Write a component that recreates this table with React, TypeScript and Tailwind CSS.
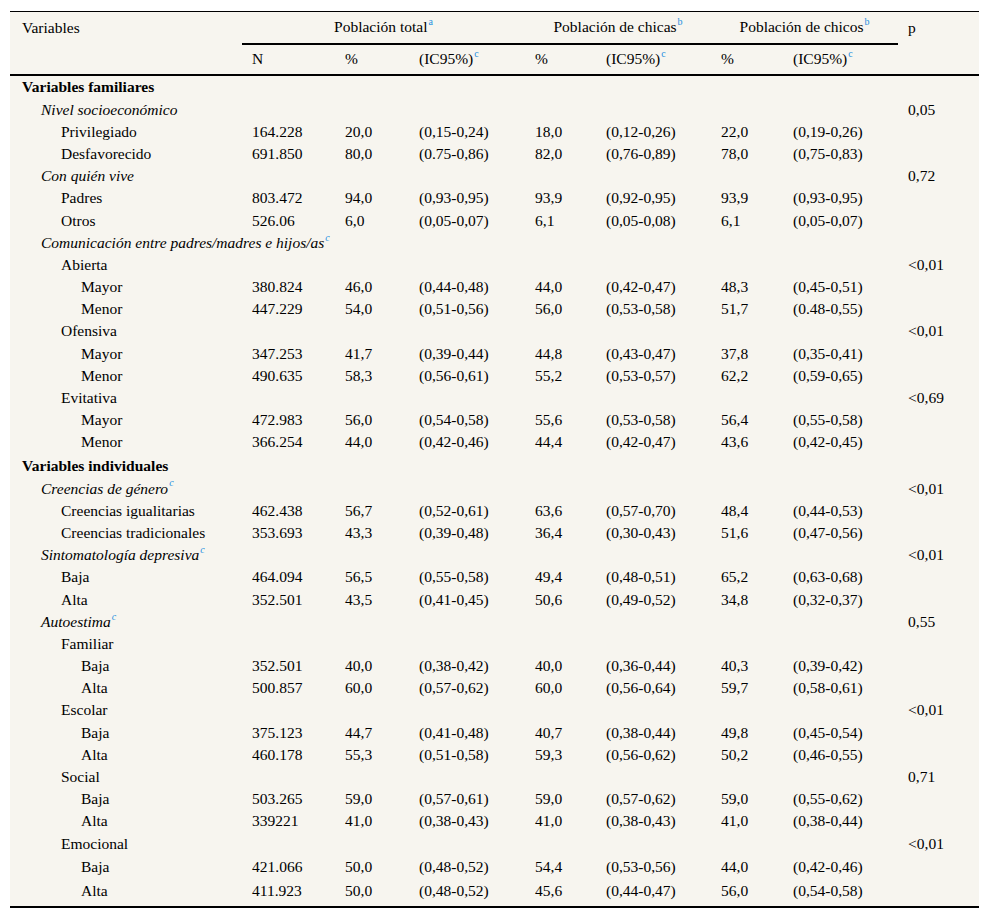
import React from "react";

type Row = {
  label: string;
  level: number;
  kind: "section" | "group" | "sub" | "data";
  sup?: string;
  vals?: string[];
  p?: string;
  h?: string;
};

const rows: Row[] = [
  { label: "Variables familiares", level: 0, kind: "section" },
  { label: "Nivel socioeconómico", level: 1, kind: "group", p: "0,05" },
  { label: "Privilegiado", level: 2, kind: "data", vals: ["164.228", "20,0", "(0,15-0,24)", "18,0", "(0,12-0,26)", "22,0", "(0,19-0,26)"] },
  { label: "Desfavorecido", level: 2, kind: "data", vals: ["691.850", "80,0", "(0.75-0,86)", "82,0", "(0,76-0,89)", "78,0", "(0,75-0,83)"] },
  { label: "Con quién vive", level: 1, kind: "group", p: "0,72" },
  { label: "Padres", level: 2, kind: "data", vals: ["803.472", "94,0", "(0,93-0,95)", "93,9", "(0,92-0,95)", "93,9", "(0,93-0,95)"] },
  { label: "Otros", level: 2, kind: "data", vals: ["526.06", "6,0", "(0,05-0,07)", "6,1", "(0,05-0,08)", "6,1", "(0,05-0,07)"] },
  { label: "Comunicación entre padres/madres e hijos/as", level: 1, kind: "group", sup: "c" },
  { label: "Abierta", level: 2, kind: "sub", p: "<0,01" },
  { label: "Mayor", level: 3, kind: "data", vals: ["380.824", "46,0", "(0,44-0,48)", "44,0", "(0,42-0,47)", "48,3", "(0,45-0,51)"] },
  { label: "Menor", level: 3, kind: "data", vals: ["447.229", "54,0", "(0,51-0,56)", "56,0", "(0,53-0,58)", "51,7", "(0.48-0,55)"] },
  { label: "Ofensiva", level: 2, kind: "sub", p: "<0,01" },
  { label: "Mayor", level: 3, kind: "data", vals: ["347.253", "41,7", "(0,39-0,44)", "44,8", "(0,43-0,47)", "37,8", "(0,35-0,41)"] },
  { label: "Menor", level: 3, kind: "data", vals: ["490.635", "58,3", "(0,56-0,61)", "55,2", "(0,53-0,57)", "62,2", "(0,59-0,65)"] },
  { label: "Evitativa", level: 2, kind: "sub", p: "<0,69" },
  { label: "Mayor", level: 3, kind: "data", vals: ["472.983", "56,0", "(0,54-0,58)", "55,6", "(0,53-0,58)", "56,4", "(0,55-0,58)"] },
  { label: "Menor", level: 3, kind: "data", vals: ["366.254", "44,0", "(0,42-0,46)", "44,4", "(0,42-0,47)", "43,6", "(0,42-0,45)"] },
  { label: "Variables individuales", level: 0, kind: "section" },
  { label: "Creencias de género", level: 1, kind: "group", sup: "c", p: "<0,01" },
  { label: "Creencias igualitarias", level: 2, kind: "data", vals: ["462.438", "56,7", "(0,52-0,61)", "63,6", "(0,57-0,70)", "48,4", "(0,44-0,53)"] },
  { label: "Creencias tradicionales", level: 2, kind: "data", vals: ["353.693", "43,3", "(0,39-0,48)", "36,4", "(0,30-0,43)", "51,6", "(0,47-0,56)"] },
  { label: "Sintomatología depresiva", level: 1, kind: "group", sup: "c", p: "<0,01" },
  { label: "Baja", level: 2, kind: "data", vals: ["464.094", "56,5", "(0,55-0,58)", "49,4", "(0,48-0,51)", "65,2", "(0,63-0,68)"] },
  { label: "Alta", level: 2, kind: "data", vals: ["352.501", "43,5", "(0,41-0,45)", "50,6", "(0,49-0,52)", "34,8", "(0,32-0,37)"] },
  { label: "Autoestima", level: 1, kind: "group", sup: "c", p: "0,55" },
  { label: "Familiar", level: 2, kind: "sub" },
  { label: "Baja", level: 3, kind: "data", vals: ["352.501", "40,0", "(0,38-0,42)", "40,0", "(0,36-0,44)", "40,3", "(0,39-0,42)"] },
  { label: "Alta", level: 3, kind: "data", vals: ["500.857", "60,0", "(0,57-0,62)", "60,0", "(0,56-0,64)", "59,7", "(0,58-0,61)"] },
  { label: "Escolar", level: 2, kind: "sub", p: "<0,01" },
  { label: "Baja", level: 3, kind: "data", vals: ["375.123", "44,7", "(0,41-0,48)", "40,7", "(0,38-0,44)", "49,8", "(0,45-0,54)"] },
  { label: "Alta", level: 3, kind: "data", vals: ["460.178", "55,3", "(0,51-0,58)", "59,3", "(0,56-0,62)", "50,2", "(0,46-0,55)"] },
  { label: "Social", level: 2, kind: "sub", p: "0,71" },
  { label: "Baja", level: 3, kind: "data", vals: ["503.265", "59,0", "(0,57-0,61)", "59,0", "(0,57-0,62)", "59,0", "(0,55-0,62)"] },
  { label: "Alta", level: 3, kind: "data", vals: ["339221", "41,0", "(0,38-0,43)", "41,0", "(0,38-0,43)", "41,0", "(0,38-0,44)"] },
  { label: "Emocional", level: 2, kind: "sub", p: "<0,01" },
  { label: "Baja", level: 3, kind: "data", h: "h-[24.5px]", vals: ["421.066", "50,0", "(0,48-0,52)", "54,4", "(0,53-0,56)", "44,0", "(0,42-0,46)"] },
  { label: "Alta", level: 3, kind: "data", h: "h-[23.5px]", vals: ["411.923", "50,0", "(0,48-0,52)", "45,6", "(0,44-0,47)", "56,0", "(0,54-0,58)"] },
];

const indent = ["pl-[12px]", "pl-[31px]", "pl-[51px]", "pl-[71px]"];

const Sup = ({ children }: { children: React.ReactNode }) => (
  <sup className="relative -top-[1px] ml-[1px] align-super text-[10px] leading-none text-[#1e90e0]">{children}</sup>
);

const App = () => {
  return (
    <div className="min-h-screen bg-white pt-[11px] pl-[10px]">
      <div
        className="w-[969px] bg-[#f7f5ef] text-[15.5px] leading-[22px] text-black"
        style={{ fontFamily: '"Liberation Serif", "Times New Roman", serif' }}
      >
        <table className="w-full table-fixed border-collapse">
          <colgroup>
            <col className="w-[232px]" />
            <col className="w-[93px]" />
            <col className="w-[74px]" />
            <col className="w-[116px]" />
            <col className="w-[71px]" />
            <col className="w-[115px]" />
            <col className="w-[72px]" />
            <col className="w-[115px]" />
            <col className="w-[81px]" />
          </colgroup>
          <thead>
            <tr className="h-[32px] border-t-[1.5px] border-black">
              <th className="pl-[12px] text-left font-normal">Variables</th>
              <th colSpan={3} className="border-b-2 border-black text-center font-normal">
                Población total<Sup>a</Sup>
              </th>
              <th colSpan={2} className="border-b-2 border-black text-center font-normal">
                Población de chicas<Sup>b</Sup>
              </th>
              <th colSpan={2} className="border-b-2 border-black text-center font-normal">
                Población de chicos<Sup>b</Sup>
              </th>
              <th className="pl-[10px] text-left font-normal">p</th>
            </tr>
            <tr className="h-[31px] border-b-2 border-black">
              <th />
              <th className="pl-[10px] text-left font-normal">N</th>
              <th className="pl-[10px] text-left font-normal">%</th>
              <th className="pl-[10px] text-left font-normal">
                (IC95%)<Sup>c</Sup>
              </th>
              <th className="pl-[10px] text-left font-normal">%</th>
              <th className="pl-[10px] text-left font-normal">
                (IC95%)<Sup>c</Sup>
              </th>
              <th className="pl-[10px] text-left font-normal">%</th>
              <th className="pl-[10px] text-left font-normal">
                (IC95%)<Sup>c</Sup>
              </th>
              <th />
            </tr>
          </thead>
          <tbody>
            {rows.map((r, i) => (
              <tr key={i} className={r.h ?? (r.kind === "section" ? "h-[24px]" : "h-[22.2px]")}>
                <td
                  className={
                    indent[r.level] +
                    " whitespace-nowrap " +
                    (r.kind === "section" ? "font-bold" : r.kind === "group" ? "italic" : "")
                  }
                >
                  {r.label}
                  {r.sup && <Sup>{r.sup}</Sup>}
                </td>
                {Array.from({ length: 7 }).map((_, j) => (
                  <td key={j} className="whitespace-nowrap pl-[10px]">
                    {r.vals ? r.vals[j] : ""}
                  </td>
                ))}
                <td className="pl-[10px]">{r.p ?? ""}</td>
              </tr>
            ))}
            <tr className="h-[4px] border-b-2 border-black">
              <td colSpan={9} />
            </tr>
          </tbody>
        </table>
      </div>
    </div>
  );
};

export default App;
